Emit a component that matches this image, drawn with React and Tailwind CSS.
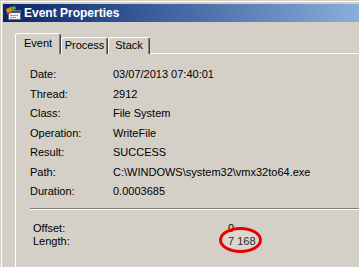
import React from 'react';

const rows = [
  ['Date:', '03/07/2013 07:40:01'],
  ['Thread:', '2912'],
  ['Class:', 'File System'],
  ['Operation:', 'WriteFile'],
  ['Result:', 'SUCCESS'],
  ['Path:', 'C:\\WINDOWS\\system32\\vmx32to64.exe'],
  ['Duration:', '0.0003685'],
];

function WindowIcon() {
  return (
    <svg width="17" height="16" viewBox="0 0 17 16" className="shrink-0">
      <rect x="3.5" y="5.5" width="12" height="9" fill="#f4f4f4" stroke="#6b6b6b" />
      <rect x="4" y="6" width="11" height="2" fill="#2b58b8" />
      <rect x="5" y="10" width="8" height="1" fill="#9a9a9a" />
      <rect x="5" y="12" width="6" height="1" fill="#9a9a9a" />
      <path d="M1 4 L6 2 L7 6 L2 8 Z" fill="#f08a1c" />
      <path d="M6 2 L10 1 L11 4 L7 6 Z" fill="#4caf32" />
      <path d="M2 8 L7 6 L7.5 7.5 L2.5 9.5 Z" fill="#d83a1c" />
    </svg>
  );
}

function Tab({ label, active, className }) {
  return (
    <div
      className={
        'flex justify-center border-l border-t border-white border-r border-r-[#404040] shadow-[inset_-1px_0_#808080] rounded-t-[3px] bg-[#d4d0c8] ' +
        (active ? 'h-[21px] pt-[3px] z-10 ' : 'h-[17px] pt-px ') +
        className
      }
    >
      <span className="leading-[13px]">{label}</span>
    </div>
  );
}

export default function App() {
  return (
    <div
      className="relative w-[359px] h-[267px] overflow-hidden bg-[#d4d0c8] pt-px pl-px text-[11px] text-black"
      style={{ fontFamily: '"Liberation Sans", Arial, sans-serif' }}
    >
      <div className="h-full border-t border-l border-white pt-[2px] pl-px flex flex-col">
        <div className="h-[18px] shrink-0 flex items-center gap-[2px] pl-[2px] bg-gradient-to-r from-[#0a246a] to-[#8aaedc]">
          <WindowIcon />
          <span className="text-white font-bold text-[12px] leading-none">Event Properties</span>
        </div>

        <div className="flex-1 flex flex-col pt-[11px] pl-[12px]">
          <div className="flex items-end h-[21px] -mb-px relative z-10">
            <Tab label="Event" active className="w-[46px]" />
            <Tab label="Process" className="w-[47px]" />
            <Tab label="Stack" className="w-[42px]" />
          </div>

          <div className="flex-1 border-t border-l border-white pt-[11px] pl-[14px]">
            {rows.map(([label, value]) => (
              <div key={label} className="flex h-[19.5px] leading-[19.5px]">
                <span className="w-[83px] shrink-0">{label}</span>
                <span className="whitespace-nowrap">{value}</span>
              </div>
            ))}

            <div className="mt-[6px] h-px bg-[#808080] border-b border-white box-content" />

            <div className="pt-[12px] pl-[3px]">
              <div className="flex h-[13px] leading-[13px]">
                <span className="w-[195px] shrink-0">Offset:</span>
                <span>0</span>
              </div>
              <div className="flex h-[13px] leading-[13px]">
                <span className="w-[195px] shrink-0">Length:</span>
                <span>7 168</span>
              </div>
            </div>
          </div>
        </div>
      </div>

      <div className="absolute left-[219px] top-[227px] w-[43px] h-[26px] rounded-[50%] border-[3px] border-[#e60000] bg-white/15" />
    </div>
  );
}
